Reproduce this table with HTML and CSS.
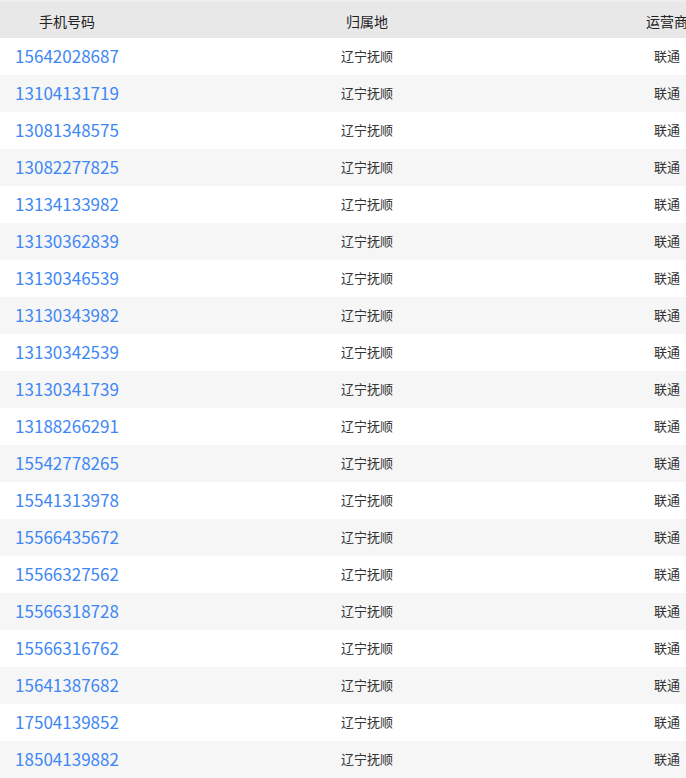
FILE: index.html
```html
<!DOCTYPE html>
<html lang="zh">
<head>
<meta charset="utf-8">
<link rel="stylesheet" href="styles.css">
</head>
<body>
<table class="tbl">
<thead>
<tr class="head"><th class="c1">手机号码</th><th class="c2">归属地</th><th class="c3">运营商</th></tr>
</thead>
<tbody>
<tr><td class="num">15642028687</td><td>辽宁抚顺</td><td>联通</td></tr>
<tr><td class="num">13104131719</td><td>辽宁抚顺</td><td>联通</td></tr>
<tr><td class="num">13081348575</td><td>辽宁抚顺</td><td>联通</td></tr>
<tr><td class="num">13082277825</td><td>辽宁抚顺</td><td>联通</td></tr>
<tr><td class="num">13134133982</td><td>辽宁抚顺</td><td>联通</td></tr>
<tr><td class="num">13130362839</td><td>辽宁抚顺</td><td>联通</td></tr>
<tr><td class="num">13130346539</td><td>辽宁抚顺</td><td>联通</td></tr>
<tr><td class="num">13130343982</td><td>辽宁抚顺</td><td>联通</td></tr>
<tr><td class="num">13130342539</td><td>辽宁抚顺</td><td>联通</td></tr>
<tr><td class="num">13130341739</td><td>辽宁抚顺</td><td>联通</td></tr>
<tr><td class="num">13188266291</td><td>辽宁抚顺</td><td>联通</td></tr>
<tr><td class="num">15542778265</td><td>辽宁抚顺</td><td>联通</td></tr>
<tr><td class="num">15541313978</td><td>辽宁抚顺</td><td>联通</td></tr>
<tr><td class="num">15566435672</td><td>辽宁抚顺</td><td>联通</td></tr>
<tr><td class="num">15566327562</td><td>辽宁抚顺</td><td>联通</td></tr>
<tr><td class="num">15566318728</td><td>辽宁抚顺</td><td>联通</td></tr>
<tr><td class="num">15566316762</td><td>辽宁抚顺</td><td>联通</td></tr>
<tr><td class="num">15641387682</td><td>辽宁抚顺</td><td>联通</td></tr>
<tr><td class="num">17504139852</td><td>辽宁抚顺</td><td>联通</td></tr>
<tr><td class="num">18504139882</td><td>辽宁抚顺</td><td>联通</td></tr>
</tbody>
</table>
</body>
</html>
```
FILE: styles.css
```css
html, body {
  margin: 0;
  padding: 0;
  background: #fff;
  overflow: hidden;
}
body {
  font-family: "Noto Sans CJK SC", "Noto Sans", sans-serif;
  color: #333;
}
.tbl {
  border-collapse: collapse;
  border-spacing: 0;
  table-layout: fixed;
  width: 734px;
}
.c1 { width: 134px; }
.c2 { width: 466px; }
.c3 { width: 134px; }
.head th {
  height: 38px;
  padding: 3px 0 0;
  box-sizing: border-box;
  background: #e8e8e8;
  box-shadow: inset 0 2px 0 #eeeeee;
  font-weight: normal;
  font-size: 14px;
  line-height: 18px;
  color: #222;
  text-align: center;
}
tbody tr td {
  height: 37px;
  padding: 0 0 2px;
  box-sizing: border-box;
  text-align: center;
  font-size: 13px;
  line-height: 18px;
  color: #333;
}
tbody tr:nth-child(even) td {
  background: #f6f6f6;
}
tbody td.num {
  font-size: 17px;
  color: #3e87f5;
  padding: 0 0 1px;
}
```
